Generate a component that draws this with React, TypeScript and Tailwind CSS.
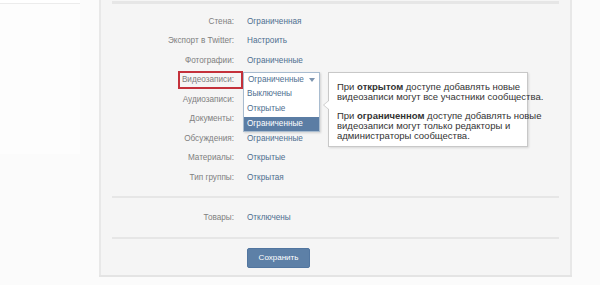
import React from "react";

const rows: [string, string][] = [
  ["Стена:", "Ограниченная"],
  ["Экспорт в Twitter:", "Настроить"],
  ["Фотографии:", "Ограниченные"],
  ["Видеозаписи:", ""],
  ["Аудиозаписи:", ""],
  ["Документы:", ""],
  ["Обсуждения:", "Ограниченные"],
  ["Материалы:", "Открытые"],
  ["Тип группы:", "Открытая"],
];

function Row({ label, value }: { label: string; value: string }) {
  return (
    <div className="flex items-center h-[19.5px]">
      <div className="w-[133px] text-right text-[#808080] whitespace-nowrap">{label}</div>
      <div className="ml-[13px] text-[#4f6f90] whitespace-nowrap">{value}</div>
    </div>
  );
}

export default function App() {
  return (
    <div
      className="w-[600px] h-[285px] bg-[#fbfbfb] flex overflow-hidden text-[8.2px] leading-none"
      style={{ fontFamily: '"Liberation Sans", Arial, sans-serif' }}
    >
      <div className="w-[99px] shrink-0">
        <div className="w-[80px] h-[4px] bg-white border-b border-[#ececec]" />
        <div className="w-[80px] h-[150px] bg-[#fdfdfd]" />
      </div>
      <div className="w-[473px] h-[277px] shrink-0 flex flex-col">
        <div className="relative flex-1 bg-[#f5f5f5] border-l-2 border-r-2 border-[#e8e8e8] flex flex-col">
          <div className="mx-[11px] h-[3px] mt-[1px] bg-[#e6e6e6]" />
          <div className="pt-[8px]">
            {rows.map(([l, v]) => (
              <Row key={l} label={l} value={v} />
            ))}
          </div>
          <div className="mx-[11px] mt-[8px] h-[2px] bg-[#e6e6e6]" />
          <div className="pt-[11px] pb-[9px]">
            <Row label="Товары:" value="Отключены" />
          </div>
          <div className="mx-[11px] h-[2px] bg-[#e6e6e6]" />
          <div className="pl-[146px] pt-[9px]">
            <button className="w-[63px] h-[20px] bg-[#5d80a7] text-white text-[8px] rounded-[2px] border border-[#5276a0]">
              Сохранить
            </button>
          </div>

          {/* red highlight */}
          <div className="absolute left-[77px] top-[71px] w-[65px] h-[18px] border-2 border-[#c4313b]" />

          {/* dropdown */}
          <div className="absolute left-[142px] top-[72px] w-[77px] bg-white border border-[#a9bccf] shadow-[1px_1px_2px_rgba(0,0,0,0.15)]">
            <div className="h-[14px] flex items-center pl-[4px] pr-[4px] text-[#4f6f90]">
              <span className="flex-1">Ограниченные</span>
              <svg width="6" height="4" viewBox="0 0 6 4">
                <path d="M0 0h6L3 4z" fill="#7d95b0" />
              </svg>
            </div>
            <div className="h-[15px] flex items-center pl-[3px] text-[#4f6f90]">Выключены</div>
            <div className="h-[15px] flex items-center pl-[3px] text-[#4f6f90]">Открытые</div>
            <div className="h-[14px] flex items-center pl-[3px] text-white bg-[#5b7da4]">Ограниченные</div>
          </div>

          {/* tooltip */}
          <div className="absolute left-[227px] top-[72px] w-[200px] h-[75px] bg-white border border-[#c8c8c8] shadow-[1px_1px_2px_rgba(0,0,0,0.12)] px-[8px] pt-[9px] text-[9.5px] leading-[10px] text-[#333] whitespace-nowrap">
            <div className="absolute -left-[6px] top-[27px] w-0 h-0 border-y-[5px] border-y-transparent border-r-[6px] border-r-[#c8c8c8]" />
            <div className="absolute -left-[5px] top-[27px] w-0 h-0 border-y-[5px] border-y-transparent border-r-[6px] border-r-white" />
            <p>
              При <b>открытом</b> доступе добавлять новые
              <br />
              видеозаписи могут все участники сообщества.
            </p>
            <p className="mt-[9px]">
              При <b>ограниченном</b> доступе добавлять новые
              <br />
              видеозаписи могут только редакторы и
              <br />
              администраторы сообщества.
            </p>
          </div>
        </div>
        <div className="h-[2px] bg-[#e4e4e4]" />
      </div>
    </div>
  );
}
